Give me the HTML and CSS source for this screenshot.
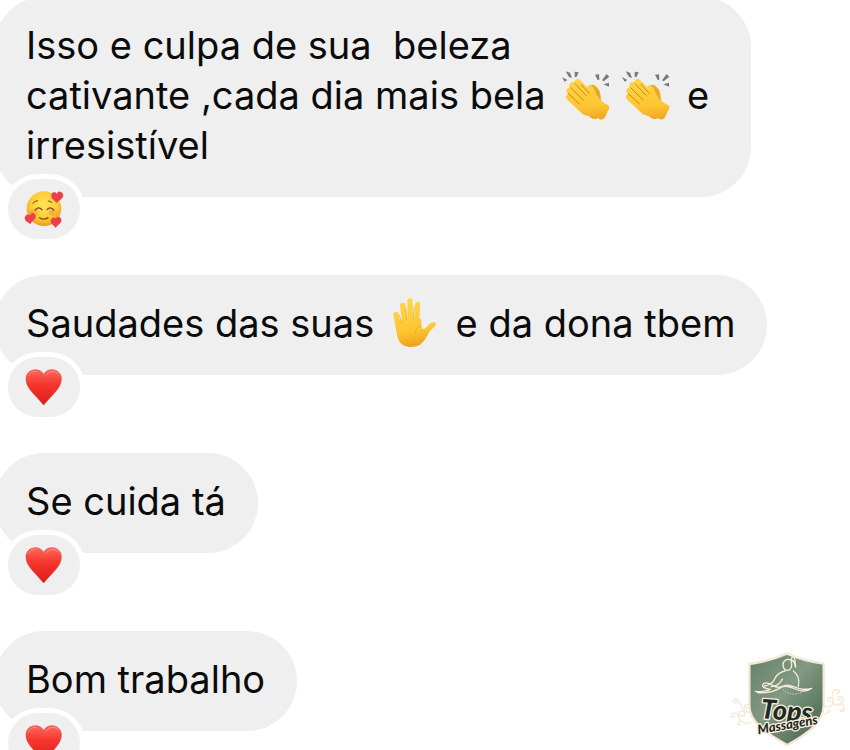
FILE: index.html
```html
<!DOCTYPE html>
<html lang="pt-BR">
<head>
    <meta charset="UTF-8">
    <meta name="viewport" content="width=device-width, initial-scale=1.0">
    <title>Mensagens</title>
    <link rel="stylesheet" href="styles.css">
</head>
<body>

    <!-- emojis usados nas mensagens -->
    <svg class="sprite" aria-hidden="true">
        <defs>
            <linearGradient id="pele" gradientUnits="userSpaceOnUse" x1="90" y1="50" x2="110" y2="185">
                <stop offset="0" stop-color="#ffd548"/>
                <stop offset="0.65" stop-color="#fdc632"/>
                <stop offset="1" stop-color="#eea31d"/>
            </linearGradient>
            <radialGradient id="rosto" cx="0.5" cy="0.4" r="0.6">
                <stop offset="0" stop-color="#ffe65a"/>
                <stop offset="0.65" stop-color="#fdca37"/>
                <stop offset="1" stop-color="#ee9a20"/>
            </radialGradient>
            <linearGradient id="vermelho" x1="0" y1="0" x2="0" y2="1">
                <stop offset="0" stop-color="#ff6a5c"/>
                <stop offset="0.4" stop-color="#f5382f"/>
                <stop offset="1" stop-color="#de1a18"/>
            </linearGradient>
            <linearGradient id="bochecha">
                <stop offset="0" stop-color="#f6803a" stop-opacity="0.55"/>
                <stop offset="1" stop-color="#f6803a" stop-opacity="0.15"/>
            </linearGradient>
        </defs>

        <symbol id="palmas" viewBox="30 24 156 156">
            <g fill="#777b80">
                <path d="M36 48l16 9-8 5z"/>
                <path d="M47 31l13 4 6 16-9-3z"/>
                <path d="M74 32l12 2-7 15-5-2z"/>
                <path d="M135 41l12-1 1 16-5 1z"/>
                <path d="M170 39l8 8-17 14-5-3z"/>
                <path d="M160 70l17-5v12z"/>
            </g>
            <!-- mão de trás -->
            <path fill="#eba726" d="M118 74q12-6 21 3 10 8 12 22l2 20 8 12-20 42q-16 4-26-10l-16-30z"/>
            <!-- mão da frente -->
            <path fill="url(#pele)" d="M80 90L114 92Q109 76 117 72Q126 71 132 84Q138 104 150 116Q162 127 174 132Q180 136 177 143L166 166Q161 178 149 175Q138 166 122 166Q104 165 92 153L62 122z"/>
            <g fill="none" stroke="url(#pele)" stroke-width="20" stroke-linecap="round">
                <path d="M58 108l46 43"/>
                <path d="M59 90l62 54"/>
                <path d="M68 73l62 54"/>
                <path d="M83 64l48 48"/>
            </g>
            <g fill="none" stroke="#c88a1d" stroke-width="3" stroke-linecap="round">
                <path d="M55 98l34 31"/>
                <path d="M62 80l38 37"/>
                <path d="M75 68l35 37"/>
                <path d="M93 70l25 27"/>
            </g>
        </symbol>

        <symbol id="mao" viewBox="30 39 156 156">
            <path fill="url(#pele)" d="M50 112L126 104L128 133Q134 138 141 131Q151 118 162 115Q171 114 171 121Q170 126 162 132Q153 139 147 151Q138 171 123 182Q110 190 91 189Q69 187 60 171Q53 158 52 139z"/>
            <g fill="none" stroke="url(#pele)" stroke-width="16" stroke-linecap="round">
                <path d="M51 92l9 47"/>
                <path d="M71 64l8 65"/>
                <path d="M93 51l1 75"/>
                <path d="M116 61l-4 65"/>
            </g>
            <g fill="none" stroke="#dea022" stroke-width="2" stroke-linecap="round">
                <path d="M67 115l-6-22"/>
                <path d="M84 107l-4-34"/>
                <path d="M103 107l2-38"/>
                <path d="M126 126q-15 3-18 19"/>
            </g>
        </symbol>

        <symbol id="coracao" viewBox="72 81 120 120">
            <path fill="url(#vermelho)" stroke="#d5332c" stroke-width="1.5" d="M131 104c4-10 14-15 25-15 17 0 28 12 28 28 0 28-27 46-53 78-26-32-53-50-53-78 0-16 11-28 28-28 11 0 21 5 25 15z"/>
            <path fill="none" stroke="#ff9a8c" stroke-width="3" stroke-linecap="round" opacity="0.75" d="M86 106q6-12 20-12M138 105q7-11 20-11 10 0 16 7"/>
        </symbol>

        <symbol id="apaixonado" viewBox="72 117 120 120">
            <circle cx="132" cy="176" r="52" fill="url(#rosto)"/>
            <ellipse cx="103" cy="188" rx="15" ry="10" fill="url(#bochecha)"/>
            <ellipse cx="161" cy="188" rx="15" ry="10" fill="url(#bochecha)"/>
            <g fill="none" stroke="#7d4a12" stroke-width="4" stroke-linecap="round">
                <path d="M106 180q9-12 20-1M141 179q10-11 20 1"/>
                <path d="M119 203q12 9 25 0"/>
                <path stroke-width="3" d="M98 160q6-8 15-8M145 153q6 0 10 4"/>
            </g>
            <g fill="#ee3f49" stroke="#dc3b44" stroke-width="1">
                <path d="M171 134c0-7 5-10 10-8 8 2 10 11 6 17-5 6-11 8-17 15-5-7-13-9-15-17-2-8 2-14 8-14 4 0 7 3 8 7z"/>
                <path d="M91 197c1-6 6-9 11-6 6 3 6 11 1 16-4 5-9 8-12 15-6-6-15-7-16-15-1-7 3-13 9-13 3 0 6 1 7 3z"/>
                <path d="M167 208c1-6 6-9 11-6 7 3 7 11 3 16-4 5-10 8-14 15-5-7-13-10-14-17-1-8 3-13 8-13 3 0 5 2 6 5z"/>
            </g>
        </symbol>
    </svg>

    <main class="chat">
        <div class="message">
            <p class="bubble">Isso e culpa de sua&nbsp; beleza<br>cativante ,cada dia mais bela <svg class="emoji" role="img" aria-label="palmas"><use href="#palmas"/></svg><svg class="emoji" role="img" aria-label="palmas"><use href="#palmas"/></svg> e<br>irresistível</p>
            <button class="reaction" type="button" aria-label="Reação apaixonado"><svg><use href="#apaixonado"/></svg></button>
        </div>

        <div class="message">
            <p class="bubble">Saudades das suas <svg class="emoji" role="img" aria-label="mão"><use href="#mao"/></svg> e da dona tbem</p>
            <button class="reaction" type="button" aria-label="Reação coração"><svg><use href="#coracao"/></svg></button>
        </div>

        <div class="message">
            <p class="bubble">Se cuida tá</p>
            <button class="reaction" type="button" aria-label="Reação coração"><svg><use href="#coracao"/></svg></button>
        </div>

        <div class="message">
            <p class="bubble">Bom trabalho</p>
            <button class="reaction" type="button" aria-label="Reação coração"><svg><use href="#coracao"/></svg></button>
        </div>
    </main>

    <!-- marca d'água -->
    <svg class="logo" viewBox="0 0 375 315" role="img" aria-label="Tops Massagens">
        <defs>
            <linearGradient id="escudo" x1="0" y1="0" x2="1" y2="1">
                <stop offset="0" stop-color="#668168"/>
                <stop offset="0.45" stop-color="#829982"/>
                <stop offset="1" stop-color="#405d49"/>
            </linearGradient>
        </defs>
        <g fill="none" stroke="#fae6d5" stroke-width="4" stroke-linecap="round">
            <path d="M78 231c-14 8-33 2-38-15-4-15 12-23 19-13 5 9-7 15-10 7M75 202c-20 2-25-22-35-35-6-9-17-3-14 4 3 6 11 2 8-3M45 213c-12-13-27-10-26 0 1 7 10 6 9 0M77 188c-5-12-18-12-18-3 0 7 9 7 9 1M47 228c-12 6-8 15-1 12"/>
            <path d="M297 184c13 5 28-1 28-17 0-12-17-13-17-2 0 7 9 6 8 0M322 174c12 12 35 5 32-12-2-13-18-10-15 0 2 6 9 2 7-2M324 151c-5-17 15-22 19-12 2 7-8 9-8 3M344 176c15 3 18 20 7 24-7 1-8-8-2-8M298 207c9 0 14-5 16-14"/>
        </g>
        <path fill="url(#escudo)" stroke="#f7e8d5" stroke-width="7" stroke-linejoin="round" d="M73 57Q136 48 186 26q51 22 110 30v125c0 51-48 85-109 119-65-35-114-70-114-118z"/>
        <g fill="none" stroke="#f5edd9" stroke-width="4" stroke-linecap="round" stroke-linejoin="round">
            <path d="M199 45c-13-6-26 3-25 16 1 10 7 16 15 15 10-2 14-15 9-27M199 45c0-11 8-13 10-3 1 8 2 16 3 24M199 45c8 2 11 10 12 21"/>
            <path d="M180 78c-17 4-25 10-31 24-5 12-14 18-30 21M172 102c-5 13-17 21-34 23M205 78c17 12 19 26 15 46"/>
            <path d="M91 139c12 3 34-1 45-6-19-2-29-10-20-17 10-8 20 2 33 8 18 9 28-7 44-3 22 6 36 17 67 9-18 15-40 7-57-1-12-6-22-7-34-3M98 143c31 4 52-5 70-15"/>
            <path stroke-width="3" stroke-dasharray="1 7" d="M175 134q23 22 59 7"/>
        </g>
        <g class="logo-text">
            <text class="logo-name" x="106" y="220" transform="rotate(4 106 220)">Tops</text>
            <text class="logo-sub" x="100" y="268" transform="rotate(-10 100 268)">Massagens</text>
        </g>
    </svg>

</body>
</html>
```
FILE: styles.css
```css
body {
    margin: 0;
    height: 100vh;
    overflow: hidden;
    position: relative;
    background-color: #fff;
    color: #0b0b0b;
    font-family: Inter, "Liberation Sans", sans-serif;
}
.sprite {
    display: block;
    width: 0;
    height: 0;
}
.chat {
    display: flex;
    flex-direction: column;
    gap: 36px;
    margin: -3px 0 0 -6px;
}
.message {
    display: flex;
    flex-direction: column;
    align-items: flex-start;
}
.bubble {
    margin: 0;
    padding: 23px 32px 27px;
    background-color: #efefef;
    border-radius: 50px;
    font-size: 38px;
    line-height: 50px;
}
.message:first-child .bubble {
    padding-right: 42px;
}
.emoji {
    width: 52px;
    height: 52px;
    margin: -6px 4px;
    vertical-align: -6px;
}
.reaction {
    display: flex;
    align-items: center;
    justify-content: center;
    width: 72px;
    height: 60px;
    margin: -18px 0 0 14px;
    padding: 0;
    border: none;
    border-radius: 30px;
    background-color: #efefef;
    box-shadow: 0 0 0 5px #fff;
    cursor: pointer;
}
.reaction svg {
    width: 40px;
    height: 40px;
}
.logo {
    position: absolute;
    right: 0;
    bottom: 0;
    width: 125px;
    height: 105px;
}
.logo-text {
    fill: #1f2b22;
    stroke: #fbf0df;
    stroke-width: 8px;
    stroke-linejoin: round;
    paint-order: stroke;
    font-family: Lato, "Open Sans", sans-serif;
    font-style: italic;
    font-weight: 900;
}
.logo-name {
    font-size: 80px;
}
.logo-sub {
    font-size: 39px;
}
```
